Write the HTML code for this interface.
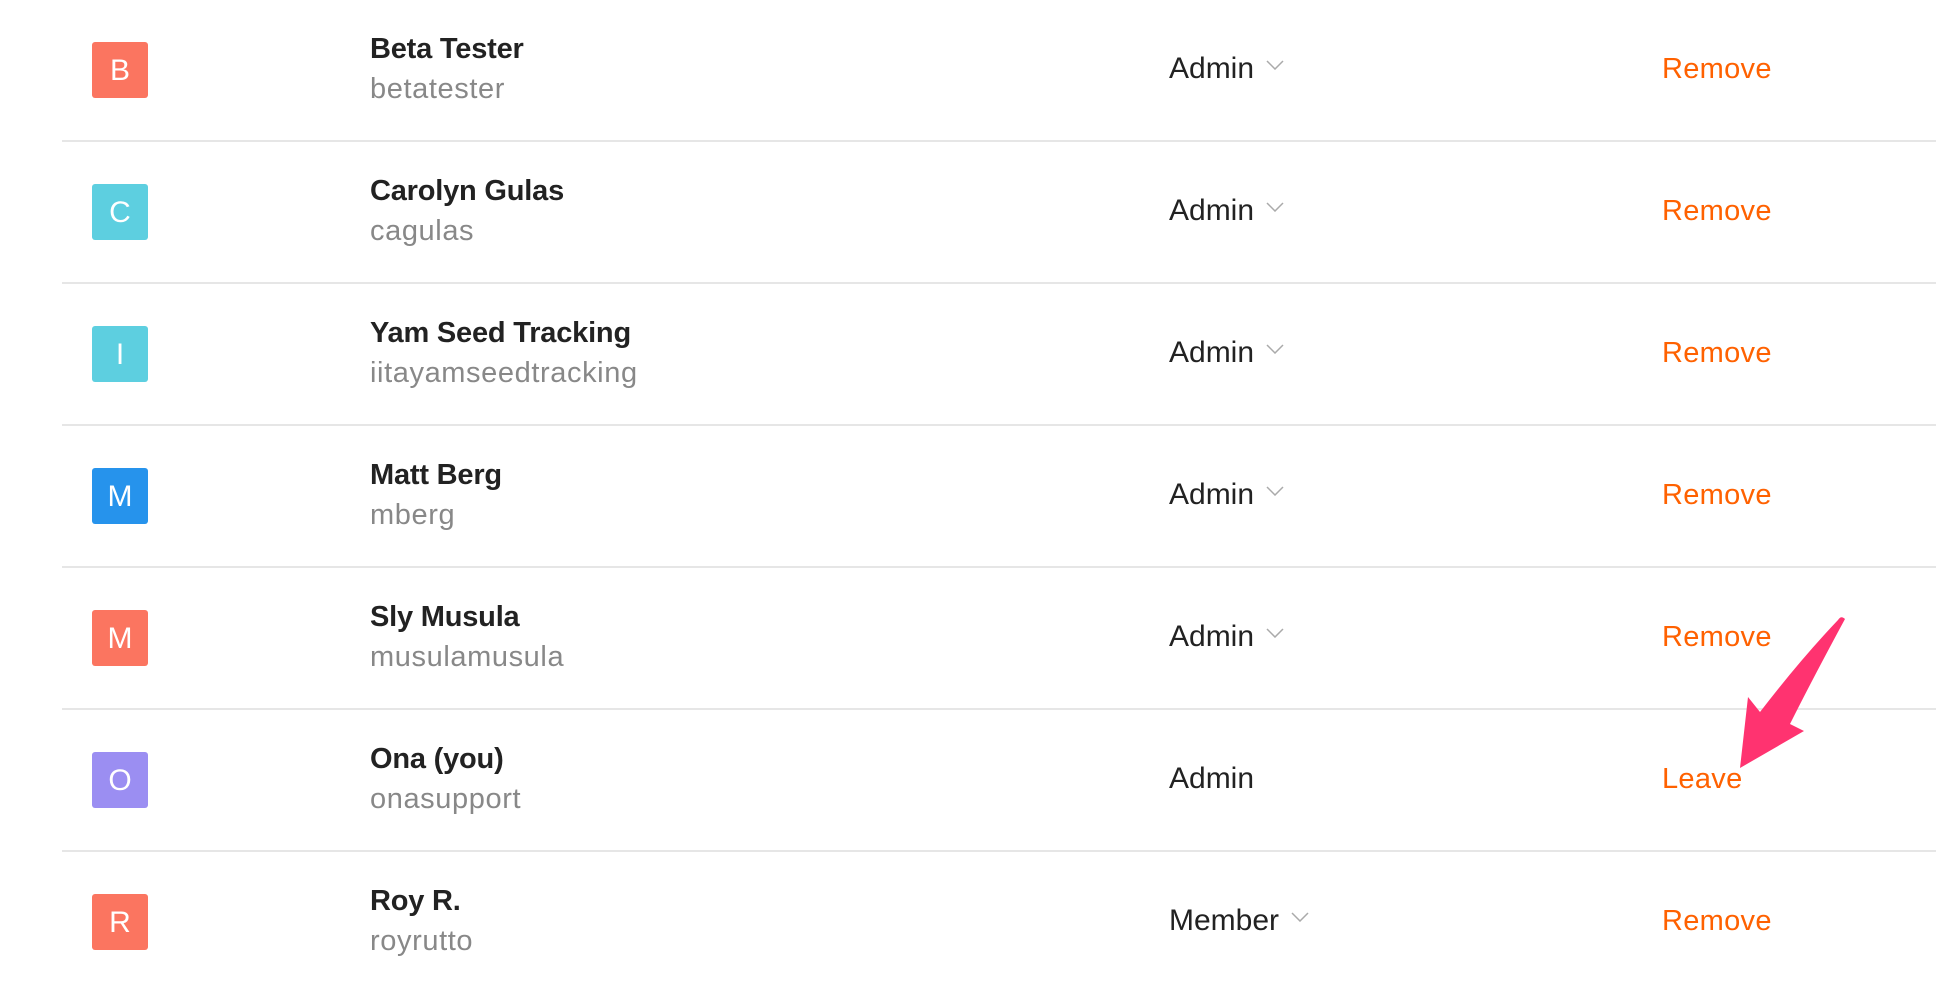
<!DOCTYPE html>
<html><head><meta charset="utf-8"><style>
body{margin:0;width:1936px;height:990px;background:#fff;font-family:"Liberation Sans",sans-serif;position:relative;overflow:hidden}
.row{position:absolute;left:0;width:1936px;height:142px}
.sep{position:absolute;left:62px;right:0;height:2px;background:#e6e6e6}
.av{position:absolute;left:92px;width:56px;height:56px;border-radius:3px;color:#fff;font-size:30px;line-height:58px;text-align:center}
.nm{position:absolute;left:370px;font-size:29px;letter-spacing:-0.2px;font-weight:bold;color:#222}
.un{position:absolute;left:370px;font-size:29px;letter-spacing:0.6px;color:#888}
.role{position:absolute;left:1169px;font-size:30px;color:#222}
.role svg{margin-left:12px;vertical-align:middle;position:relative;top:-5px}
.act{position:absolute;left:1662px;font-size:29px;letter-spacing:0.3px;color:#ff6100}
</style></head><body>
<div class="row" style="top:0"><div class="av" style="top:42px;background:#fb7560">B</div><div class="nm" style="top:33px">Beta Tester</div><div class="un" style="top:73px">betatester</div><div class="role" style="top:52px">Admin<svg width="18" height="10"><path d="M1 1L9 9L17 1" fill="none" stroke="#aaa" stroke-width="1.5"/></svg></div><div class="act" style="top:53px">Remove</div></div>
<div class="sep" style="top:140px"></div>
<div class="row" style="top:142px"><div class="av" style="top:42px;background:#5dcfe0">C</div><div class="nm" style="top:33px">Carolyn Gulas</div><div class="un" style="top:73px">cagulas</div><div class="role" style="top:52px">Admin<svg width="18" height="10"><path d="M1 1L9 9L17 1" fill="none" stroke="#aaa" stroke-width="1.5"/></svg></div><div class="act" style="top:53px">Remove</div></div>
<div class="sep" style="top:282px"></div>
<div class="row" style="top:284px"><div class="av" style="top:42px;background:#5dcfe0">I</div><div class="nm" style="top:33px">Yam Seed Tracking</div><div class="un" style="top:73px">iitayamseedtracking</div><div class="role" style="top:52px">Admin<svg width="18" height="10"><path d="M1 1L9 9L17 1" fill="none" stroke="#aaa" stroke-width="1.5"/></svg></div><div class="act" style="top:53px">Remove</div></div>
<div class="sep" style="top:424px"></div>
<div class="row" style="top:426px"><div class="av" style="top:42px;background:#2693ec">M</div><div class="nm" style="top:33px">Matt Berg</div><div class="un" style="top:73px">mberg</div><div class="role" style="top:52px">Admin<svg width="18" height="10"><path d="M1 1L9 9L17 1" fill="none" stroke="#aaa" stroke-width="1.5"/></svg></div><div class="act" style="top:53px">Remove</div></div>
<div class="sep" style="top:566px"></div>
<div class="row" style="top:568px"><div class="av" style="top:42px;background:#fb7560">M</div><div class="nm" style="top:33px">Sly Musula</div><div class="un" style="top:73px">musulamusula</div><div class="role" style="top:52px">Admin<svg width="18" height="10"><path d="M1 1L9 9L17 1" fill="none" stroke="#aaa" stroke-width="1.5"/></svg></div><div class="act" style="top:53px">Remove</div></div>
<div class="sep" style="top:708px"></div>
<div class="row" style="top:710px"><div class="av" style="top:42px;background:#9b8ef2">O</div><div class="nm" style="top:33px">Ona (you)</div><div class="un" style="top:73px">onasupport</div><div class="role" style="top:52px">Admin</div><div class="act" style="top:53px">Leave</div></div>
<div class="sep" style="top:850px"></div>
<div class="row" style="top:852px"><div class="av" style="top:42px;background:#fb7560">R</div><div class="nm" style="top:33px">Roy R.</div><div class="un" style="top:73px">royrutto</div><div class="role" style="top:52px">Member<svg width="18" height="10"><path d="M1 1L9 9L17 1" fill="none" stroke="#aaa" stroke-width="1.5"/></svg></div><div class="act" style="top:53px">Remove</div></div>
<svg style="position:absolute;left:0;top:0" width="1936" height="990"><path d="M1838,620 Q1841,615 1845,619 Q1812,680 1790,724 L1804,731 L1740,768 L1748,697 L1760,712 Q1800,660 1838,620Z" fill="#ff3370"/></svg>
</body></html>
